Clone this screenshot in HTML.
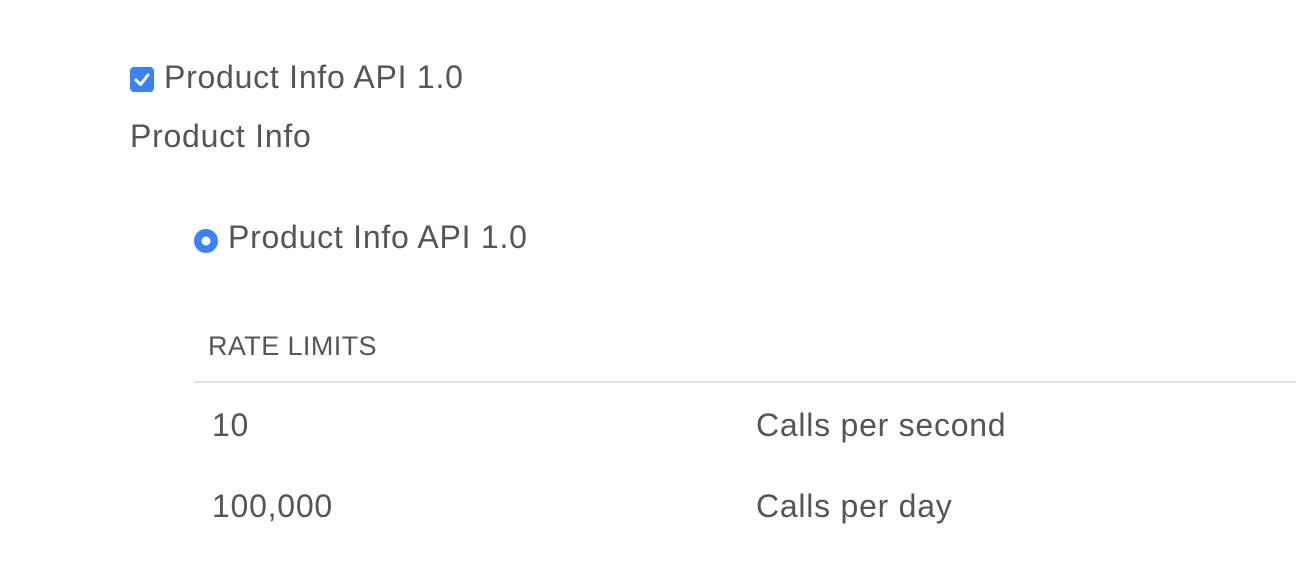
<!DOCTYPE html>
<html><head><meta charset="utf-8"><style>
body{margin:0;width:1296px;height:582px;background:#fff;font-family:"Liberation Sans",Arial,sans-serif;color:#555;position:relative;overflow:hidden}
.t{position:absolute;white-space:nowrap;line-height:1;letter-spacing:0.75px}
</style></head><body>
<svg style="position:absolute;left:130px;top:67px" width="24" height="25" viewBox="0 0 24 25"><rect x="0" y="0" width="24" height="25" rx="4" fill="#3b82f6"/><path d="M6 13 L10.5 17.5 L18 8" stroke="#fff" stroke-width="3" fill="none" stroke-linecap="round" stroke-linejoin="round"/></svg>
<div class="t" style="left:164px;top:61px;font-size:32px">Product Info API 1.0</div>
<div class="t" style="left:130px;top:120px;font-size:32px">Product Info</div>
<svg style="position:absolute;left:194px;top:229px" width="24" height="24"><circle cx="12" cy="12" r="12" fill="#3b82f6"/><circle cx="12" cy="12" r="4.5" fill="#fff"/></svg>
<div class="t" style="left:228px;top:221px;font-size:32px">Product Info API 1.0</div>
<div class="t" style="left:208px;top:333px;font-size:27px;letter-spacing:0.4px">RATE LIMITS</div>
<div style="position:absolute;left:194px;top:381px;width:1102px;height:2px;background:#e2e2e2"></div>
<div class="t" style="left:212px;top:409px;font-size:32px">10</div>
<div class="t" style="left:756px;top:409px;font-size:32px">Calls per second</div>
<div class="t" style="left:212px;top:490px;font-size:32px">100,000</div>
<div class="t" style="left:756px;top:490px;font-size:32px">Calls per day</div>
</body></html>
